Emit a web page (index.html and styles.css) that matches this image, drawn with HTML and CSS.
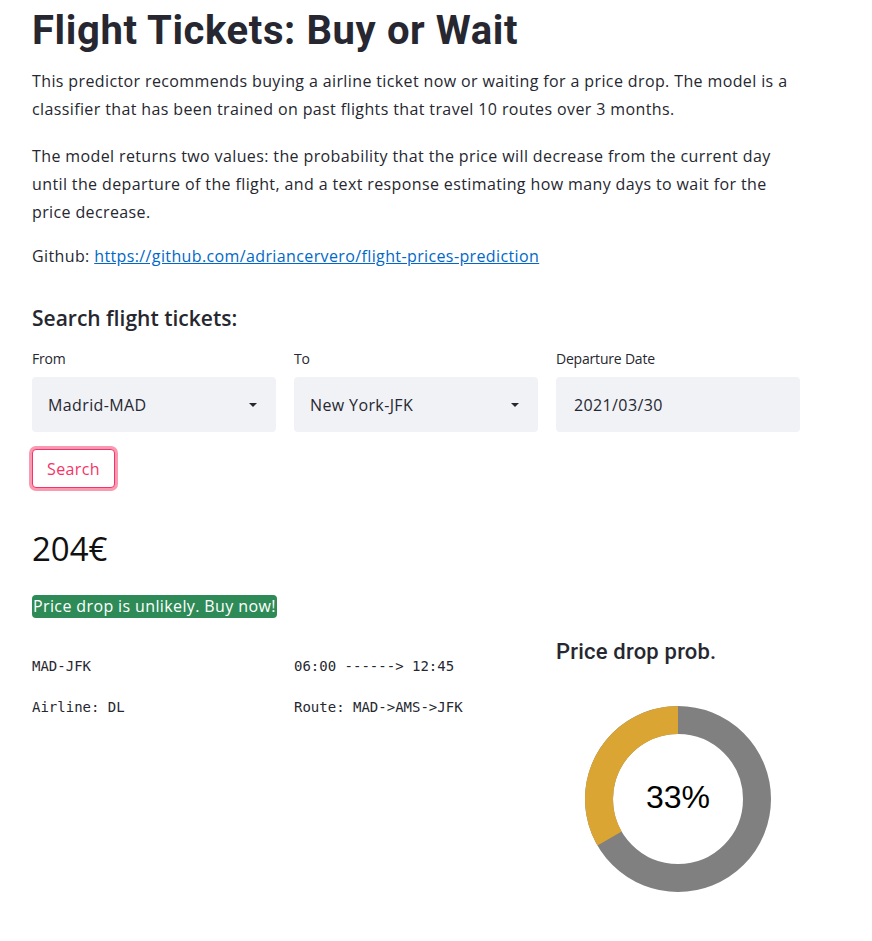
FILE: index.html
```html
<!DOCTYPE html>
<html>
<head>
<meta charset="utf-8">
<link rel="stylesheet" href="styles.css">
</head>
<body>
<main class="page">
  <h1 class="title">Flight Tickets: Buy or Wait</h1>
  <p class="para p1">This predictor recommends buying a airline ticket now or waiting for a price drop. The model is a classifier that has been trained on past flights that travel 10 routes over 3 months.</p>
  <p class="para p2">The model returns two values: the probability that the price will decrease from the current day until the departure of the flight, and a text response estimating how many days to wait for the price decrease.</p>
  <p class="para p3">Github: <a href="#" class="link">https://github.com/adriancervero/flight-prices-prediction</a></p>

  <h3 class="section">Search flight tickets:</h3>
  <div class="grid fields">
    <div class="field">
      <label class="label">From</label>
      <div class="input select"><span>Madrid-MAD</span><span class="caret"></span></div>
    </div>
    <div class="field">
      <label class="label">To</label>
      <div class="input select"><span>New York-JFK</span><span class="caret"></span></div>
    </div>
    <div class="field">
      <label class="label">Departure Date</label>
      <div class="input date"><span>2021/03/30</span></div>
    </div>
  </div>
  <button class="btn">Search</button>

  <div class="price">204€</div>
  <div class="badge-row"><span class="badge">Price drop is unlikely. Buy now!</span></div>

  <div class="grid results">
    <div class="mono-col">
      <div class="mono">MAD-JFK</div>
      <div class="mono">Airline: DL</div>
    </div>
    <div class="mono-col">
      <div class="mono">06:00 ------&gt; 12:45</div>
      <div class="mono">Route: MAD-&gt;AMS-&gt;JFK</div>
    </div>
    <div class="chart-col">
      <div class="chart-title">Price drop prob.</div>
      <div class="donut">
        <svg width="186" height="186" viewBox="0 0 186 186">
          <circle cx="93" cy="93" r="79" fill="none" stroke="#808080" stroke-width="28"/>
          <path d="M93 14 A79 79 0 0 0 24.58 132.5" fill="none" stroke="#daa532" stroke-width="28"/>
        </svg>
        <span class="donut-label">33%</span>
      </div>
    </div>
  </div>
</main>
</body>
</html>
```
FILE: styles.css
```css
* { box-sizing: border-box; }
body {
  margin: 0;
  background: #fff;
  color: #262730;
  font-family: "Open Sans", "Noto Sans", sans-serif;
}
.page {
  width: 768px;
  margin-left: 32px;
  padding-top: 7px;
}
.title {
  margin: 0;
  font-family: Roboto, "Open Sans", sans-serif;
  font-size: 40px;
  line-height: 48px;
  font-weight: 700;
  letter-spacing: 0.6px;
}
.para {
  margin: 0;
  font-size: 16px;
  line-height: 28px;
  letter-spacing: 0.38px;
}
.p1 { margin-top: 12px; }
.p2 { margin-top: 19px; }
.p3 { margin-top: 16px; }
.link { color: #0068c9; }
.section {
  margin: 32px 0 0;
  font-size: 21px;
  line-height: 32px;
  font-weight: 600;
}
.grid {
  display: grid;
  grid-template-columns: 244px 244px 244px;
  column-gap: 18px;
}
.fields { margin-top: 15px; }
.label {
  display: block;
  font-size: 14px;
  line-height: 20px;
  margin-bottom: 8px;
  letter-spacing: -0.2px;
}
.input {
  height: 55px;
  background: #f0f2f6;
  border-radius: 4px;
  display: flex;
  align-items: center;
  justify-content: space-between;
  font-size: 16px;
  letter-spacing: 0.38px;
}
.select { padding: 0 19px 0 16px; }
.date { padding: 0 18px; }
.caret {
  width: 0; height: 0;
  border-left: 4px solid transparent;
  border-right: 4px solid transparent;
  border-top: 4px solid #262730;
}
.btn {
  margin-top: 17px;
  display: block;
  width: 83px;
  height: 39px;
  background: #fff;
  border: 1px solid #f63366;
  border-radius: 4px;
  box-shadow: 0 0 0 3px rgba(246, 51, 102, 0.5);
  color: #f63366;
  font-family: inherit;
  font-size: 16px;
  letter-spacing: 0.38px;
  padding: 0;
}
.price {
  margin-top: 39px;
  font-size: 33px;
  line-height: 44px;
  color: #111;
}
.badge-row { margin-top: 24px; line-height: 23px; }
.badge {
  display: inline-block;
  background: #2e8b57;
  color: #fff;
  border-radius: 4px;
  font-size: 16px;
  line-height: 23px;
  letter-spacing: 0.38px;
  padding: 0 1px;
}
.results { margin-top: 21px; }
.mono-col {
  padding-top: 17px;
  display: flex;
  flex-direction: column;
  gap: 21px;
}
.mono {
  font-family: "DejaVu Sans Mono", "Liberation Mono", monospace;
  font-size: 14px;
  line-height: 20px;
  color: #262730;
}
.chart-title {
  font-family: Roboto, "Liberation Sans", sans-serif;
  font-size: 22px;
  line-height: 26px;
  font-weight: 500;
  letter-spacing: 0.2px;
}
.donut {
  position: relative;
  width: 186px;
  height: 186px;
  margin: 41px auto 0;
}
.donut svg { display: block; }
.donut-label {
  position: absolute;
  inset: 0;
  display: flex;
  align-items: center;
  justify-content: center;
  padding-bottom: 3px;
  font-family: "Liberation Sans", Arial, sans-serif;
  font-size: 32px;
  color: #000;
}
```
